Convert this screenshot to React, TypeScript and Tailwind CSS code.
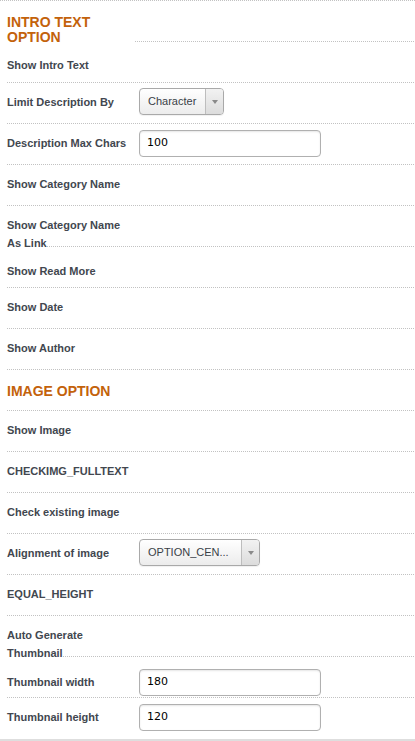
import React from "react";

type Row =
  | { kind: "heading"; label: string }
  | { kind: "text"; label: string; shift?: string }
  | { kind: "select"; label: string; value: string; width: string; shift?: string }
  | { kind: "input"; label: string; value: string; shift?: string };

const rows: Row[] = [
  { kind: "heading", label: "INTRO TEXT OPTION" },
  { kind: "text", label: "Show Intro Text", shift: "pt-[4px]" },
  { kind: "select", label: "Limit Description By", value: "Character", width: "w-[85px]" },
  { kind: "input", label: "Description Max Chars", value: "100" },
  { kind: "text", label: "Show Category Name" },
  { kind: "text", label: "Show Category Name As Link" },
  { kind: "text", label: "Show Read More", shift: "pt-[5px]" },
  { kind: "text", label: "Show Date" },
  { kind: "text", label: "Show Author" },
  { kind: "heading", label: "IMAGE OPTION" },
  { kind: "text", label: "Show Image" },
  { kind: "text", label: "CHECKIMG_FULLTEXT" },
  { kind: "text", label: "Check existing image" },
  { kind: "select", label: "Alignment of image", value: "OPTION_CEN...", width: "w-[121px]" },
  { kind: "text", label: "EQUAL_HEIGHT" },
  { kind: "text", label: "Auto Generate Thumbnail" },
  { kind: "input", label: "Thumbnail width", value: "180", shift: "pt-[5.5px]" },
  { kind: "input", label: "Thumbnail height", value: "120" },
];

function Label({ text }: { text: string }) {
  return (
    <div className="relative w-[125px] mr-[7px] shrink-0 pt-[10px] text-[11px] leading-[18px] font-bold text-[#42474f]">
      <span className="bg-white">{text}</span>
    </div>
  );
}

function Select({ value, width }: { value: string; width: string }) {
  return (
    <div
      className={`${width} mt-[5px] h-[27px] flex rounded-[4px] border border-[#a9a9a9] bg-gradient-to-b from-white to-[#ececec] shadow-[0_1px_1px_rgba(0,0,0,0.06)] overflow-hidden`}
    >
      <div className="flex-1 flex items-center pl-[8px] text-[11px] text-[#3a3f47] whitespace-nowrap overflow-hidden">
        {value}
      </div>
      <div className="w-[18px] shrink-0 border-l border-[#bdbdbd] bg-gradient-to-b from-[#f2f2f2] to-[#dcdcdc] flex items-center justify-center">
        <div className="w-0 h-0 border-l-[3px] border-r-[3px] border-t-[4px] border-l-transparent border-r-transparent border-t-[#8a8a8a]" />
      </div>
    </div>
  );
}

function Input({ value }: { value: string }) {
  return (
    <div className="mt-[6px] w-[182px] h-[27px] rounded-[4px] border border-[#b0b0b0] bg-white shadow-[inset_0_1px_2px_rgba(0,0,0,0.1)] flex items-center pl-[7px] text-[11px] text-black [font-family:'DejaVu_Sans',sans-serif]">
      {value}
    </div>
  );
}

export default function App() {
  return (
    <div className="w-[415px] bg-white [font-family:'Liberation_Sans',Arial,sans-serif]">
      <div className="border-t border-dotted border-[#c2c2c2]">
        {rows.map((r, i) => {
          const last = i === rows.length - 1;
          const rowCls = `ml-[7px] mr-[1px] h-[41px] flex items-start ${
            last ? "" : "border-b border-dotted border-[#c2c2c2]"
          } ${"shift" in r && r.shift ? r.shift : ""}`;
          if (r.kind === "heading") {
            return (
              <div key={i} className={rowCls}>
                <div className="relative w-[128px] shrink-0 bg-white pt-[14px] text-[14px] leading-[15px] font-bold text-[#c3620b]">
                  {r.label}
                </div>
              </div>
            );
          }
          return (
            <div key={i} className={rowCls}>
              <Label text={r.label} />
              {r.kind === "select" && <Select value={r.value} width={r.width} />}
              {r.kind === "input" && <Input value={r.value} />}
            </div>
          );
        })}
      </div>
      <div className="border-t-2 border-[#dedede]" />
      <div className="h-[8px]" />
    </div>
  );
}
